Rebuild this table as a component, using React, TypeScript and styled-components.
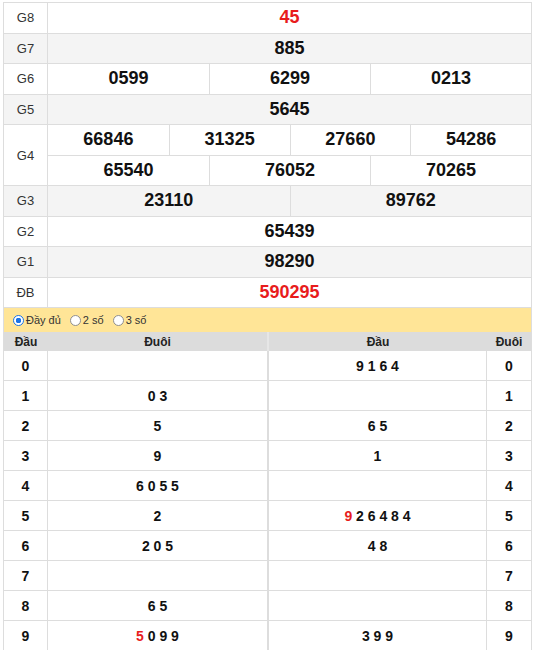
import React from "react";
import styled, { createGlobalStyle } from "styled-components";

const Global = createGlobalStyle`
  html, body { margin: 0; padding: 0; background: #fff; }
  body { font-family: "Liberation Sans", Arial, sans-serif; color: #222; }
`;

const Wrapper = styled.div`
  width: 529px;
  margin: 2px 0 0 3px;
  box-sizing: border-box;
  border-left: 1px solid #ddd;
  border-right: 1px solid #ddd;
  border-top: 1px solid #ddd;
`;

const PrizeRow = styled.div<{ $alt?: boolean; $lines?: number }>`
  display: grid;
  grid-template-columns: 44px 1fr;
  height: ${(p) => (p.$lines || 1) * 30.5}px;
  box-sizing: border-box;
  border-bottom: 1px solid #ddd;
  background: ${(p) => (p.$alt ? "#f4f4f4" : "#fff")};
`;

const Label = styled.div`
  display: flex;
  align-items: center;
  justify-content: center;
  font-size: 13px;
  color: #333;
  border-right: 1px solid #ddd;
`;

const Lines = styled.div`
  display: flex;
  flex-direction: column;
`;

const Line = styled.div<{ $cols: number }>`
  flex: 1;
  display: grid;
  grid-template-columns: repeat(${(p) => p.$cols}, 1fr);
  & + & { border-top: 1px solid #ddd; }
`;

const Num = styled.div<{ $red?: boolean }>`
  display: flex;
  align-items: center;
  justify-content: center;
  font-size: 18px;
  font-weight: bold;
  color: ${(p) => (p.$red ? "#e81c1c" : "#111")};
  & + & { border-left: 1px solid #ddd; }
`;

const RadioBar = styled.div`
  height: 24px;
  background: #ffe597;
  display: flex;
  align-items: center;
  padding-left: 9px;
  gap: 9px;
  font-size: 11px;
  color: #333;
`;

const RadioLabel = styled.label`
  display: flex;
  align-items: center;
  gap: 2px;
`;

const Radio = styled.input`
  appearance: none;
  width: 11px;
  height: 11px;
  margin: 0;
  border-radius: 50%;
  box-sizing: border-box;
  border: 1px solid #8f8f8f;
  background: #fff;
  &:checked {
    border: 1px solid #1a73e8;
    background: radial-gradient(circle, #1a73e8 0 2.6px, #fff 3px 100%);
  }
`;

const LotoGrid = styled.div`
  display: grid;
  grid-template-columns: 44px 219px 220px 1fr;
`;

const HeadCell = styled.div<{ $divider?: boolean }>`
  height: 19px;
  background: #dcdcdc;
  display: flex;
  align-items: center;
  justify-content: center;
  font-size: 12px;
  font-weight: bold;
  color: #222;
  ${(p) => (p.$divider ? "border-left: 2px solid #e6e6e6;" : "")}
`;

const Cell = styled.div<{ $side?: boolean; $divider?: boolean }>`
  height: 30px;
  box-sizing: border-box;
  border-bottom: 1px solid #ddd;
  display: flex;
  align-items: center;
  justify-content: center;
  font-size: 14px;
  font-weight: bold;
  color: #111;
  white-space: pre;
  ${(p) => (p.$side ? "border-right: 1px solid #ddd;" : "")}
  ${(p) => (p.$divider ? "border-left: 2px solid #ddd;" : "")}
`;

const Red = styled.span`
  color: #e81c1c;
`;

type Prize = { label: string; lines: string[][]; red?: boolean };

const prizes: Prize[] = [
  { label: "G8", lines: [["45"]], red: true },
  { label: "G7", lines: [["885"]] },
  { label: "G6", lines: [["0599", "6299", "0213"]] },
  { label: "G5", lines: [["5645"]] },
  { label: "G4", lines: [["66846", "31325", "27660", "54286"], ["65540", "76052", "70265"]] },
  { label: "G3", lines: [["23110", "89762"]] },
  { label: "G2", lines: [["65439"]] },
  { label: "G1", lines: [["98290"]] },
  { label: "ĐB", lines: [["590295"]], red: true },
];

const dau: string[] = ["", "0 3", "5", "9", "6 0 5 5", "2", "2 0 5", "", "6 5", "5 0 9 9"];
const duoi: string[] = ["9 1 6 4", "", "6 5", "1", "", "9 2 6 4 8 4", "4 8", "", "", "3 9 9"];
const redFirstLeft = [9];
const redFirstRight = [5];

function Digits({ text, redFirst }: { text: string; redFirst: boolean }) {
  if (!redFirst || !text) return <span>{text}</span>;
  return (
    <span>
      <Red>{text[0]}</Red>
      {text.slice(1)}
    </span>
  );
}

export default function App() {
  return (
    <>
      <Global />
      <Wrapper>
        {prizes.map((p, i) => (
          <PrizeRow key={p.label} $alt={i % 2 === 1} $lines={p.lines.length}>
            <Label>{p.label}</Label>
            <Lines>
              {p.lines.map((line, li) => (
                <Line key={li} $cols={line.length}>
                  {line.map((n) => (
                    <Num key={n} $red={p.red}>
                      {n}
                    </Num>
                  ))}
                </Line>
              ))}
            </Lines>
          </PrizeRow>
        ))}
        <RadioBar>
          <RadioLabel>
            <Radio type="radio" name="mode" defaultChecked />
            Đầy đủ
          </RadioLabel>
          <RadioLabel>
            <Radio type="radio" name="mode" />2 số
          </RadioLabel>
          <RadioLabel>
            <Radio type="radio" name="mode" />3 số
          </RadioLabel>
        </RadioBar>
        <LotoGrid>
          <HeadCell>Đầu</HeadCell>
          <HeadCell>Đuôi</HeadCell>
          <HeadCell $divider>Đầu</HeadCell>
          <HeadCell>Đuôi</HeadCell>
          {dau.map((d, i) => (
            <React.Fragment key={i}>
              <Cell $side>{i}</Cell>
              <Cell>
                <Digits text={d} redFirst={redFirstLeft.includes(i)} />
              </Cell>
              <Cell $divider $side>
                <Digits text={duoi[i]} redFirst={redFirstRight.includes(i)} />
              </Cell>
              <Cell>{i}</Cell>
            </React.Fragment>
          ))}
        </LotoGrid>
      </Wrapper>
    </>
  );
}
